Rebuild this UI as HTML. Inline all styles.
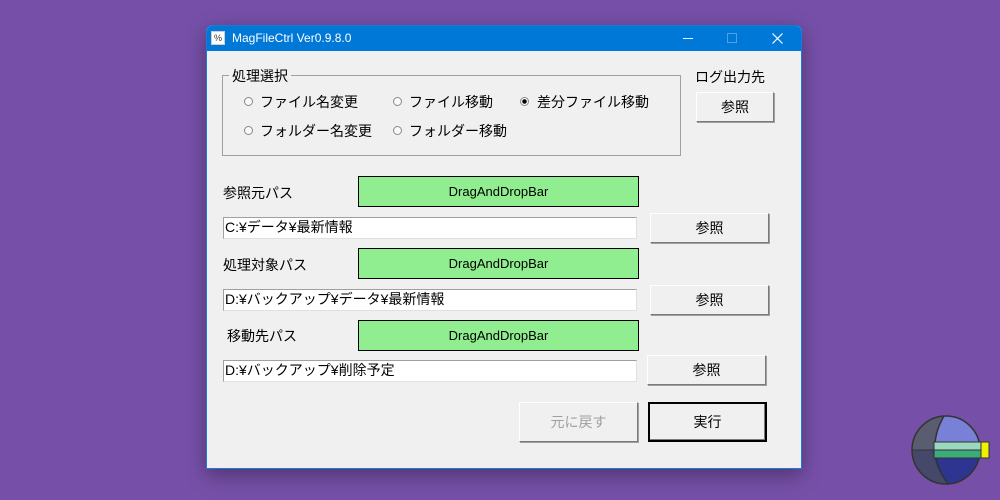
<!DOCTYPE html>
<html><head><meta charset="utf-8"><style>
*{margin:0;padding:0;box-sizing:border-box}
body{width:1000px;height:500px;background:#7650a8;position:relative;overflow:hidden;font-family:"Liberation Sans","Noto Sans CJK JP",sans-serif;font-size:14px;color:#000}
.win{position:absolute;left:206px;top:25px;width:596px;height:444px;background:#f0f0f0;border:1px solid #1a7ad6;border-radius:6px 6px 0 0;overflow:hidden;box-shadow:0 6px 20px rgba(0,0,0,.35)}
.tb{position:absolute;left:0;top:0;width:100%;height:25px;background:#0078d7;color:#fff;font-size:12px}
.a{position:absolute;white-space:nowrap}
.btn{position:absolute;background:#f0f0f0;border:1px solid;border-color:#fff #7a7a7a #7a7a7a #fff;box-shadow:1px 1px 0 #a0a0a0;text-align:center}
.bar{position:absolute;background:#90ee90;border:1px solid #000;text-align:center;font-size:13px;line-height:29px}
.tx{position:absolute;background:#fff;border:1px solid;border-color:#a0a0a0 #e0e0e0 #e0e0e0 #a0a0a0;font-size:14px;line-height:18px;padding-left:1px}
.r{position:absolute;width:9px;height:9px;border-radius:50%;border:1px solid #888;background:#fafafa}
</style></head><body>
<div class="win">
<div class="tb">
<div class="a" style="left:4px;top:5px;width:14px;height:14px;background:#fff;border:1px solid #ccc;font-size:9px;color:#333;line-height:12px;text-align:center">%</div>
<div class="a" style="left:25px;top:5px">MagFileCtrl Ver0.9.8.0</div>
<div class="a" style="left:476px;top:12px;width:10px;height:1px;background:#fff"></div>
<div class="a" style="left:520px;top:7px;width:10px;height:10px;border:1px solid #4fa0e8"></div>
<svg class="a" style="left:565px;top:7px" width="11" height="11"><path d="M0.5 0.5L10.5 10.5M10.5 0.5L0.5 10.5" stroke="#fff" stroke-width="1.2"/></svg>
</div>
<div class="a" style="left:15px;top:49px;width:459px;height:81px;border:1px solid #a0a0a0"></div>
<div class="a" style="left:22px;top:40px;background:#f0f0f0;padding:0 3px">処理選択</div>
<div class="r" style="left:37px;top:71px"></div><div class="a" style="left:53px;top:66px">ファイル名変更</div>
<div class="r" style="left:186px;top:71px"></div><div class="a" style="left:202px;top:66px">ファイル移動</div>
<div class="r" style="left:313px;top:71px;background:radial-gradient(circle,#000 0 2px,#fafafa 2.5px)"></div><div class="a" style="left:330px;top:66px">差分ファイル移動</div>
<div class="r" style="left:37px;top:100px"></div><div class="a" style="left:53px;top:95px">フォルダー名変更</div>
<div class="r" style="left:186px;top:100px"></div><div class="a" style="left:202px;top:95px">フォルダー移動</div>
<div class="a" style="left:488px;top:41px">ログ出力先</div>
<div class="btn" style="left:489px;top:66px;width:78px;height:30px;line-height:28px">参照</div>

<div class="a" style="left:16px;top:157px">参照元パス</div>
<div class="bar" style="left:151px;top:150px;width:281px;height:31px">DragAndDropBar</div>
<div class="tx" style="left:16px;top:191px;width:414px;height:22px">C:¥データ¥最新情報</div>
<div class="btn" style="left:443px;top:187px;width:119px;height:30px;line-height:28px">参照</div>

<div class="a" style="left:16px;top:229px">処理対象パス</div>
<div class="bar" style="left:151px;top:222px;width:281px;height:31px">DragAndDropBar</div>
<div class="tx" style="left:16px;top:263px;width:414px;height:22px">D:¥バックアップ¥データ¥最新情報</div>
<div class="btn" style="left:443px;top:259px;width:119px;height:30px;line-height:28px">参照</div>

<div class="a" style="left:20px;top:300px">移動先パス</div>
<div class="bar" style="left:151px;top:294px;width:281px;height:31px">DragAndDropBar</div>
<div class="tx" style="left:16px;top:334px;width:414px;height:22px">D:¥バックアップ¥削除予定</div>
<div class="btn" style="left:440px;top:329px;width:119px;height:30px;line-height:28px">参照</div>

<div class="btn" style="left:312px;top:376px;width:119px;height:40px;line-height:38px;color:#a0a0a0">元に戻す</div>
<div class="btn" style="left:441px;top:376px;width:119px;height:40px;line-height:36px;border:2px solid #000;box-shadow:inset -1px -1px 0 #7a7a7a">実行</div>
</div>
<svg class="a" style="left:910px;top:412px" width="80" height="76" viewBox="0 0 80 76">
<defs><clipPath id="c"><circle cx="36" cy="38" r="34"/></clipPath></defs>
<g clip-path="url(#c)">
<rect x="0" y="0" width="80" height="38" fill="#5a5c70"/>
<rect x="0" y="38" width="80" height="40" fill="#454868"/>
<path d="M34 3 Q14 38 38 73 L80 73 L80 3Z" fill="#7880d8"/>
<path d="M22 38 Q26 58 38 73 L80 73 L80 38Z" fill="#2e3590"/>
</g>
<circle cx="36" cy="38" r="34" fill="none" stroke="#333" stroke-width="1.5"/>
<path d="M34 4 Q14 38 38 72" fill="none" stroke="#333" stroke-width="1.5"/>
<line x1="2" y1="38" x2="70" y2="38" stroke="#333" stroke-width="1"/>
<rect x="24" y="30" width="47" height="8" fill="#9ad8c0" stroke="#333"/>
<rect x="24" y="38" width="47" height="8" fill="#3caa7a" stroke="#333"/>
<rect x="71" y="30" width="8" height="16" fill="#f0f000" stroke="#333"/>
</svg>
</body></html>
